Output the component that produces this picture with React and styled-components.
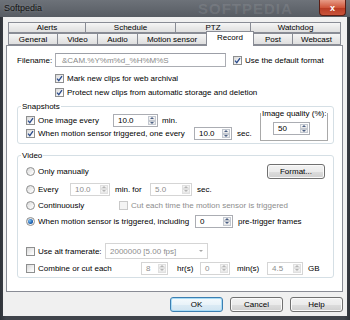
import React from "react"
import styled, { createGlobalStyle } from "styled-components"

const GlobalStyle = createGlobalStyle`
  html, body {
    margin: 0;
    padding: 0;
    background: #34383e;
  }
  body {
    font-family: "Liberation Sans", Arial, sans-serif;
    font-size: 8px;
    color: #000;
  }
`

const Window = styled.div`
  width: 350px;
  height: 320px;
  display: flex;
  flex-direction: column;
  background: linear-gradient(90deg, #2f3339, #40444b 6px, #40444b 344px, #2f3339);
  overflow: hidden;
`

const TitleBar = styled.div`
  position: relative;
  height: 17px;
  flex-shrink: 0;
  display: flex;
  align-items: flex-start;
  justify-content: space-between;
  padding-left: 4px;
  background: linear-gradient(#6d7279, #575c63);
  overflow: hidden;
`

const Title = styled.span`
  font-size: 9px;
  line-height: 17px;
  color: #111;
  text-shadow: 0 0 3px rgba(255, 255, 255, 0.25);
`

const TitleMark = styled.span`
  position: absolute;
  left: 198px;
  top: 0;
  font-size: 15px;
  line-height: 17px;
  font-weight: bold;
  letter-spacing: 1px;
  color: rgba(255, 255, 255, 0.1);
  pointer-events: none;
`

const CloseBtn = styled.div`
  position: relative;
  width: 27px;
  height: 16px;
  margin-right: 4px;
  box-sizing: border-box;
  border: 1px solid #5a1d14;
  border-top: none;
  border-radius: 0 0 4px 4px;
  background: linear-gradient(#e79b86, #d0573c 50%, #b83a22 51%, #c9533a);
  display: flex;
  align-items: center;
  justify-content: center;
  color: #fff;
  font-size: 9px;
  font-weight: bold;
`

const Frame = styled.div`
  flex: 1;
  display: flex;
  padding: 0 4px 4px 3px;
`

const Client = styled.div`
  flex: 1;
  display: flex;
  flex-direction: column;
  background: #f0f0f0;
  padding: 5px 4px 4px 3px;
`

const TabStrip = styled.div`
  padding: 0 2px;
`

const TabRow = styled.div`
  display: flex;
  height: ${({ $h }) => $h}px;
`

const Tab = styled.div`
  position: relative;
  box-sizing: border-box;
  flex-shrink: 0;
  width: ${({ $w }) => $w}px;
  height: ${({ $active, $h }) => ($active ? $h + 3 : $h)}px;
  margin-top: ${({ $active }) => ($active ? -2 : 0)}px;
  margin-left: ${({ $first }) => ($first ? 0 : -1)}px;
  z-index: ${({ $active }) => ($active ? 2 : 0)};
  border: 1px solid #898c95;
  border-bottom: ${({ $active }) => ($active ? "none" : "1px solid #898c95")};
  background: ${({ $active }) =>
    $active ? "#fff" : "linear-gradient(#f6f6f6, #e9e9e9 50%, #e0e0e0)"};
  display: flex;
  align-items: ${({ $active }) => ($active ? "flex-start" : "center")};
  padding-top: ${({ $active }) => ($active ? 1 : 0)}px;
  justify-content: center;
  font-size: 8px;
  white-space: nowrap;
`

const Pane = styled.div`
  box-sizing: border-box;
  height: 247px;
  border: 1px solid #898c95;
  background: #fff;
  padding: 7px 8px 0 10px;
  display: flex;
  flex-direction: column;
`

const Row = styled.div`
  display: flex;
  align-items: center;
  flex-shrink: 0;
  height: ${({ $h }) => $h || 14}px;
  margin-top: ${({ $mt }) => $mt || 0}px;
  margin-left: ${({ $ml }) => $ml || 0}px;
  align-self: ${({ $wide }) => ($wide ? "stretch" : "auto")};
`

const Cell = styled.div`
  display: flex;
  align-items: center;
  gap: 3px;
  flex-shrink: 0;
  width: ${({ $w }) => ($w ? `${$w}px` : "auto")};
`

const Text = styled.span`
  flex-shrink: 0;
  white-space: nowrap;
  color: ${({ $off }) => ($off ? "#8d8d8d" : "#000")};
  width: ${({ $w }) => ($w ? `${$w}px` : "auto")};
  margin-left: ${({ $ml }) => $ml || 0}px;
`

const Field = styled.div`
  box-sizing: border-box;
  width: ${({ $w }) => $w}px;
  height: 14px;
  border: 1px solid #abadb3;
  border-top-color: #9c9fa7;
  background: #fff;
  padding-left: 6px;
  display: flex;
  align-items: center;
  color: #8a8a8a;
  white-space: nowrap;
`

const Box = styled.span`
  box-sizing: border-box;
  width: 9px;
  height: 9px;
  flex-shrink: 0;
  border: 1px solid ${({ $off }) => ($off ? "#c9c9c9" : "#8e8f8f")};
  border-radius: ${({ $round }) => ($round ? "50%" : "0")};
  background: ${({ $off }) =>
    $off ? "#f4f4f4" : "linear-gradient(135deg, #d8d8d8, #f7f7f7 70%, #fff)"};
  display: flex;
  align-items: center;
  justify-content: center;
  margin-left: ${({ $ml }) => $ml || 0}px;
`

const Dot = styled.span`
  width: 5px;
  height: 5px;
  border-radius: 50%;
  background: radial-gradient(circle at 35% 35%, #7fc3f5, #1b5faf 60%, #0d3f80);
`

const Check = ({ checked, off, ml }) => (
  <Box $off={off} $ml={ml}>
    {checked && (
      <svg width="7" height="7" viewBox="0 0 7 7">
        <path d="M1 3.6 L2.8 5.6 L6 1.2" fill="none" stroke="#2b4c8c" strokeWidth="1.3" />
      </svg>
    )}
  </Box>
)

const Radio = ({ checked }) => <Box $round>{checked && <Dot />}</Box>

const SpinBox = styled.div`
  box-sizing: border-box;
  flex-shrink: 0;
  width: ${({ $w }) => $w}px;
  height: 13px;
  border: 1px solid ${({ $off }) => ($off ? "#d5d5d5" : "#abadb3")};
  background: #fff;
  padding: 1px 1px 1px 0;
  display: flex;
`

const SpinValue = styled.span`
  flex: 1;
  padding-left: 4px;
  line-height: 9px;
  color: ${({ $off }) => ($off ? "#8d8d8d" : "#000")};
`

const SpinArrows = styled.div`
  width: 8px;
  display: flex;
  flex-direction: column;
`

const SpinBtn = styled.div`
  flex: 1;
  box-sizing: border-box;
  border: 1px solid ${({ $off }) => ($off ? "#e0e0e0" : "#c3c8d0")};
  background: linear-gradient(#f7f7f7, #e6e6e6);
  display: flex;
  align-items: center;
  justify-content: center;
`

const Tri = styled.span`
  width: 0;
  height: 0;
  border-left: 2px solid transparent;
  border-right: 2px solid transparent;
  ${({ $up, $off }) =>
    $up
      ? `border-bottom: 2px solid ${$off ? "#b5b5b5" : "#4d6185"};`
      : `border-top: 2px solid ${$off ? "#b5b5b5" : "#4d6185"};`}
`

const Spin = ({ w, value, off }) => (
  <SpinBox $w={w} $off={off}>
    <SpinValue $off={off}>{value}</SpinValue>
    <SpinArrows>
      <SpinBtn $off={off}>
        <Tri $up $off={off} />
      </SpinBtn>
      <SpinBtn $off={off}>
        <Tri $off={off} />
      </SpinBtn>
    </SpinArrows>
  </SpinBox>
)

const Group = styled.fieldset`
  margin: ${({ $mt }) => $mt || 0}px 0 0 0;
  padding: 0 0 0 3px;
  min-width: 0;
  border: 1px solid #d5dfe5;
  border-radius: 3px;
  flex-shrink: 0;
`

const Legend = styled.legend`
  padding: 0 1px;
  font-size: 8px;
  line-height: 9px;
  white-space: nowrap;
`

const GroupBody = styled.div`
  display: flex;
  flex-direction: ${({ $col }) => ($col ? "column" : "row")};
  align-items: flex-start;
  padding: ${({ $pt }) => $pt}px ${({ $pr }) => $pr}px ${({ $pb }) => $pb}px 5px;
`

const Column = styled.div`
  display: flex;
  flex-direction: column;
  padding-top: 3px;
`

const QualityBox = styled.fieldset`
  box-sizing: border-box;
  margin: -2px 0 0 auto;
  width: 68px;
  height: 32px;
  padding: 0;
  min-width: 0;
  border: 1px solid #a9a9a9;
  box-shadow: inset 1px 1px 0 #fff;
`

const QualityBody = styled.div`
  padding: 4px 0 0 12px;
`

const Select = styled.div`
  box-sizing: border-box;
  width: 103px;
  height: 16px;
  border: 1px solid #d5d5d5;
  background: #fff;
  display: flex;
  align-items: center;
  justify-content: space-between;
  padding: 0 4px;
  color: #8d8d8d;
  white-space: nowrap;
`

const Caret = styled.span`
  width: 0;
  height: 0;
  border-left: 2px solid transparent;
  border-right: 2px solid transparent;
  border-top: 2px solid #a8a8a8;
`

const Button = styled.div`
  box-sizing: border-box;
  flex-shrink: 0;
  width: ${({ $w }) => $w}px;
  height: 15px;
  border: 1px solid ${({ $def }) => ($def ? "#3c7fb1" : "#707070")};
  border-radius: 3px;
  background: ${({ $def }) =>
    $def
      ? "linear-gradient(#f5fafd, #e9f3f9 50%, #dcebf5 51%, #d0e4f1)"
      : "linear-gradient(#f2f2f2, #ebebeb 50%, #dddddd 51%, #cfcfcf)"};
  box-shadow: ${({ $def }) => ($def ? "inset 0 0 0 1px #a8dcf7" : "inset 0 0 0 1px #fafafa")};
  display: flex;
  align-items: center;
  justify-content: center;
  margin-left: ${({ $push }) => ($push ? "auto" : "0")};
`

const ButtonBar = styled.div`
  display: flex;
  justify-content: flex-end;
  gap: 7px;
  margin-top: 5px;
`

const topTabs = [
  ["Alerts", 78],
  ["Schedule", 91],
  ["PTZ", 76],
  ["Watchdog", 91],
]

const bottomTabs = [
  ["General", 50],
  ["Video", 41],
  ["Audio", 41],
  ["Motion sensor", 70],
  ["Record", 48],
  ["Post", 40],
  ["Webcast", 49],
]

export default function App() {
  return (
    <>
      <GlobalStyle />
      <Window>
        <TitleBar>
          <Title>Softpedia</Title>
          <TitleMark>SOFTPEDIA</TitleMark>
          <CloseBtn>x</CloseBtn>
        </TitleBar>
        <Frame>
          <Client>
            <TabStrip>
              <TabRow $h={11}>
                {topTabs.map(([name, w], i) => (
                  <Tab key={name} $w={w} $h={11} $first={i === 0}>
                    {name}
                  </Tab>
                ))}
              </TabRow>
              <TabRow $h={12}>
                {bottomTabs.map(([name, w], i) => (
                  <Tab key={name} $w={w} $h={12} $first={i === 0} $active={name === "Record"}>
                    {name}
                  </Tab>
                ))}
              </TabRow>
            </TabStrip>
            <Pane>
              <Row>
                <Text $w={38}>Filename:</Text>
                <Field $w={171}>&amp;CAM.%Y%m%d_%H%M%S</Field>
                <Check checked ml={7} />
                <Text $ml={3}>Use the default format</Text>
              </Row>
              <Row $mt={4} $ml={38}>
                <Cell>
                  <Check checked />
                  <Text>Mark new clips for web archival</Text>
                </Cell>
              </Row>
              <Row $ml={38}>
                <Cell>
                  <Check checked />
                  <Text>Protect new clips from automatic storage and deletion</Text>
                </Cell>
              </Row>

              <Group $mt={3}>
                <Legend>Snapshots</Legend>
                <GroupBody $pt={0} $pr={5} $pb={2}>
                  <Column>
                    <Row $h={13}>
                      <Cell $w={87}>
                        <Check checked />
                        <Text>One image every</Text>
                      </Cell>
                      <Spin w={45} value="10.0" />
                      <Text $ml={4}>min.</Text>
                    </Row>
                    <Row $h={13}>
                      <Cell $w={168}>
                        <Check checked />
                        <Text>When motion sensor triggered, one every</Text>
                      </Cell>
                      <Spin w={38} value="10.0" />
                      <Text $ml={5}>sec.</Text>
                    </Row>
                  </Column>
                  <QualityBox>
                    <Legend>Image quality (%):</Legend>
                    <QualityBody>
                      <Spin w={37} value="50" />
                    </QualityBody>
                  </QualityBox>
                </GroupBody>
              </Group>

              <Group $mt={7}>
                <Legend>Video</Legend>
                <GroupBody $col $pt={3} $pr={8} $pb={1}>
                  <Row $h={16} $wide>
                    <Cell>
                      <Radio />
                      <Text>Only manually</Text>
                    </Cell>
                    <Button $w={58} $push>
                      Format...
                    </Button>
                  </Row>
                  <Row $h={16} $mt={2}>
                    <Cell $w={44}>
                      <Radio />
                      <Text>Every</Text>
                    </Cell>
                    <Spin w={40} value="10.0" off />
                    <Text $ml={5} $w={35}>
                      min. for
                    </Text>
                    <Spin w={42} value="5.0" off />
                    <Text $ml={5}>sec.</Text>
                  </Row>
                  <Row $h={16}>
                    <Cell $w={93}>
                      <Radio />
                      <Text>Continuously</Text>
                    </Cell>
                    <Cell>
                      <Check off />
                      <Text $off>Cut each time the motion sensor is triggered</Text>
                    </Cell>
                  </Row>
                  <Row $h={16}>
                    <Cell $w={169}>
                      <Radio checked />
                      <Text>When motion sensor is triggered, including</Text>
                    </Cell>
                    <Spin w={38} value="0" />
                    <Text $ml={5}>pre-trigger frames</Text>
                  </Row>
                  <Row $h={16} $mt={14}>
                    <Cell $w={79}>
                      <Check />
                      <Text>Use alt framerate:</Text>
                    </Cell>
                    <Select>
                      <span>2000000 [5.00 fps]</span>
                      <Caret />
                    </Select>
                  </Row>
                  <Row $h={16} $mt={1}>
                    <Cell $w={115}>
                      <Check />
                      <Text>Combine or cut each</Text>
                    </Cell>
                    <Spin w={27} value="8" off />
                    <Text $ml={9} $w={23}>
                      hr(s)
                    </Text>
                    <Spin w={30} value="0" off />
                    <Text $ml={7} $w={30}>
                      min(s)
                    </Text>
                    <Spin w={36} value="4.5" off />
                    <Text $ml={5}>GB</Text>
                  </Row>
                </GroupBody>
              </Group>
            </Pane>
            <ButtonBar>
              <Button $w={53} $def>
                OK
              </Button>
              <Button $w={53}>Cancel</Button>
              <Button $w={53}>Help</Button>
            </ButtonBar>
          </Client>
        </Frame>
      </Window>
    </>
  )
}
